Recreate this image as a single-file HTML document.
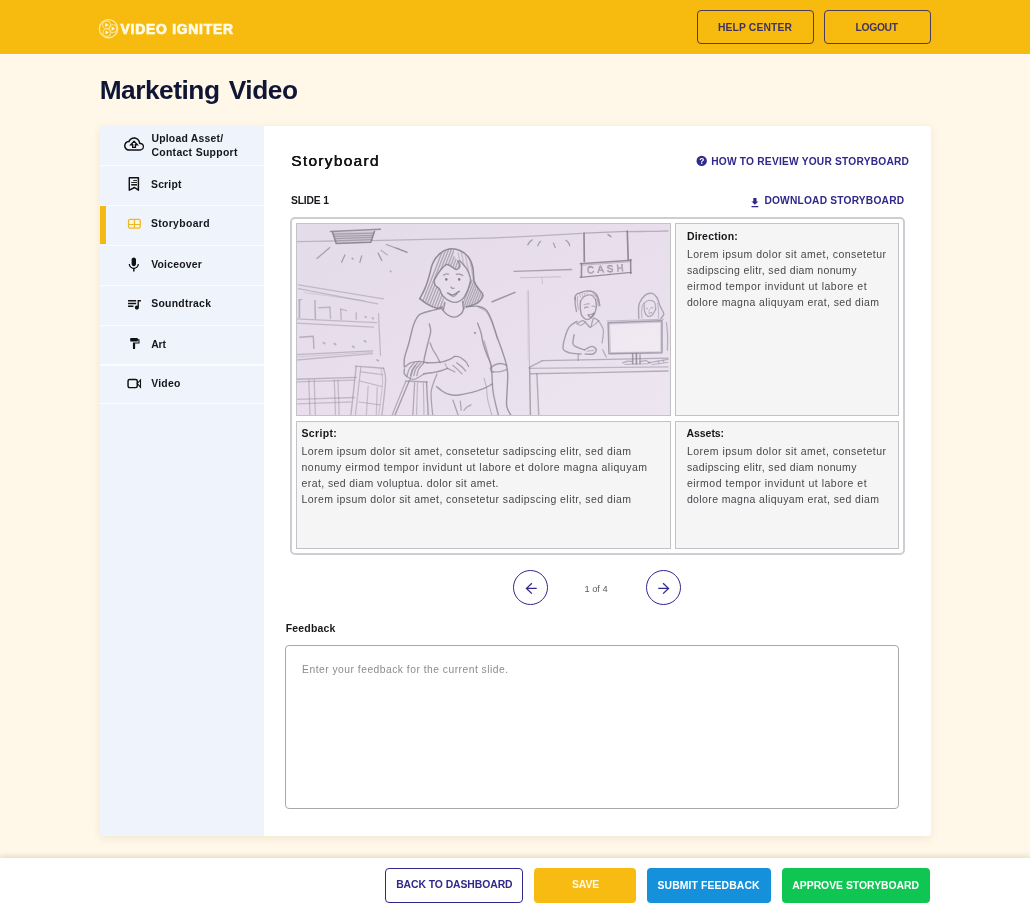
<!DOCTYPE html>
<html lang="en">
<head>
<meta charset="utf-8">
<title>Marketing Video - Storyboard</title>
<style>
*{box-sizing:border-box;margin:0;padding:0}
html,body{width:1030px;height:912px;overflow:hidden}
body{background:#fff7e8;font-family:"Liberation Sans",sans-serif;color:#17171b;position:relative}
.t{position:absolute;white-space:nowrap;font-family:"Liberation Sans",sans-serif}
#hdr{position:absolute;left:0;top:0;width:1030px;height:53.8px;background:#f7bb0f}
.hbtn{position:absolute;top:10px;height:34.2px;border:1.8px solid #4a3d55;border-radius:4px}
#card{position:absolute;left:100px;top:125.5px;width:830.5px;height:710px;background:#fff;border-radius:3px;box-shadow:0 2px 8px rgba(120,90,20,.10);overflow:hidden}
#side{position:absolute;left:0;top:0;width:164px;height:710px;background:#eff3fc}
.sep{position:absolute;left:0;width:164px;height:1.5px;background:#fafcff}
#act{position:absolute;left:0;top:80.5px;width:6px;height:38px;background:#f6b912}
#sb{position:absolute;left:290px;top:217px;width:615px;height:338px;border:2px solid #cecdd1;border-radius:5px;background:#fff}
.cell{position:absolute;border:1.5px solid #c3c2c7;background:#f5f5f6;overflow:hidden}
.circ{position:absolute;width:35px;height:35px;border:1.5px solid #2f2889;border-radius:50%}
#ta{position:absolute;left:285px;top:645px;width:614px;height:164px;border:1px solid #a9a9ad;border-radius:4px;background:#fff}
#foot{position:absolute;left:0;top:857.5px;width:1030px;height:55px;background:#fff;box-shadow:0 -2px 5px rgba(140,120,80,.22)}
.fb{position:absolute;top:10.5px;height:34.5px;border-radius:4px}
svg.ic{position:absolute;overflow:visible}
#txt{position:absolute;left:0;top:0;width:1030px;height:912px;will-change:transform}
svg{will-change:transform}
</style>
</head>
<body>
<div id="hdr"></div>
<div id="hdrline" style="position:absolute;left:0;top:53.8px;width:1030px;height:1.6px;background:#fffcf4"></div>
<div class="hbtn" style="left:697px;width:116.5px"></div>
<div class="hbtn" style="left:824px;width:107px"></div>
<div id="card">
  <div id="side">
    <div class="sep" style="top:39.0px"></div>
    <div class="sep" style="top:79.0px"></div>
    <div class="sep" style="top:119.0px"></div>
    <div class="sep" style="top:159.0px"></div>
    <div class="sep" style="top:199.0px"></div>
    <div class="sep" style="top:238.5px"></div>
    <div class="sep" style="top:277.0px"></div>
    <div id="act"></div>
  </div>
</div>
<div id="sb">
  <div class="cell" id="img" style="left:4px;top:4px;width:375px;height:193px;background:#e6e0ee"><svg style="position:absolute;left:-1.5px;top:-1.5px" width="375" height="193" viewBox="0 0 375 193">
<defs><filter id="pb" x="-5%" y="-5%" width="110%" height="110%"><feGaussianBlur stdDeviation=".42"/></filter>
<linearGradient id="pg" x1="0" y1="0" x2="1" y2="1"><stop offset="0" stop-color="#e4dce9"/><stop offset=".5" stop-color="#e8deec"/><stop offset="1" stop-color="#ebe4f0"/></linearGradient></defs>
<rect width="375" height="193" fill="url(#pg)"/>
<path d="M312.1 99.7 L366 97.8 L366 129.8 L313 130.7Z" fill="#fff" opacity=".28"/>
<path d="M36.5 9.1 L40.2 20.6 L74.8 19.2 L78.5 8.2Z" fill="#86818d" opacity=".22"/>
<path d="M242 151 L372 148.4 L372 193 L243.5 193Z" fill="#fff" opacity=".1"/>
<g filter="url(#pb)" fill="none" stroke="#86818d" stroke-linecap="round" stroke-linejoin="round">
<path d="M0.0 18.6 C6.0 18.5 29.3 18.1 36.0 18.0 C42.7 17.9 39.3 18.2 40.0 18.2" stroke-width="1.26" opacity="0.44"/>
<path d="M75.0 17.6 C82.5 17.4 101.2 17.0 120.0 16.6 C138.8 16.2 166.3 15.9 188.0 15.2 C209.7 14.5 233.7 13.2 250.0 12.4 C266.3 11.6 280.0 10.7 286.0 10.4" stroke-width="1.26" opacity="0.46"/>
<path d="M288.0 10.2 L331.3 8.4" stroke-width="1.26" opacity="0.54"/>
<path d="M332.0 8.6 C335.3 8.6 345.3 8.5 352.0 8.4 C358.7 8.3 368.7 8.1 372.0 8.0" stroke-width="1.26" opacity="0.49"/>
<path d="M34.5 8.4 L84.5 6.2" stroke-width="1.54" opacity="0.84"/>
<path d="M36.5 9.1 L40.2 20.6 L74.8 19.2 L78.5 8.2" stroke-width="1.54" opacity="0.89"/>
<path d="M37.2 11.2 L77.8 10.2" stroke-width="1.26" opacity="0.59"/>
<path d="M37.9 13.4 L77.2 12.3" stroke-width="1.26" opacity="0.59"/>
<path d="M38.6 15.6 L76.5 14.4" stroke-width="1.26" opacity="0.59"/>
<path d="M39.4 17.9 L75.7 16.7" stroke-width="1.26" opacity="0.59"/>
<path d="M21.0 35.6 L33.8 24.6" stroke-width="1.26" opacity="0.64"/>
<path d="M45.6 39.2 L48.9 31.9" stroke-width="1.26" opacity="0.69"/>
<path d="M63.9 39.4 L65.7 32.9" stroke-width="1.26" opacity="0.69"/>
<path d="M82.1 30.1 L85.8 37.4" stroke-width="1.26" opacity="0.69"/>
<path d="M85.0 27.2 L91.5 32.0" stroke-width="1.12" opacity="0.49"/>
<path d="M90.3 21.5 L111.0 29.2" stroke-width="1.26" opacity="0.64"/>
<path d="M56.2 35.4 L57.0 36.0" stroke-width="1.54" opacity="0.64"/>
<path d="M94.3 48.0 L95.0 48.6" stroke-width="1.54" opacity="0.54"/>
<path d="M100.0 24.8 L110.9 29.5" stroke-width="1.26" opacity="0.54"/>
<path d="M231.8 21.9 C232.1 21.4 232.8 19.9 233.6 19.0 C234.4 18.1 235.9 17.2 236.4 16.8" stroke-width="1.26" opacity="0.69"/>
<path d="M241.8 22.8 C242.0 22.4 242.5 20.9 243.0 20.2 C243.5 19.4 244.3 18.6 244.6 18.3" stroke-width="1.26" opacity="0.64"/>
<path d="M257.4 20.1 L259.2 24.6" stroke-width="1.26" opacity="0.64"/>
<path d="M270.1 17.3 C270.5 17.7 271.8 18.7 272.4 19.6 C273.0 20.5 273.6 22.3 273.8 22.8" stroke-width="1.26" opacity="0.69"/>
<path d="M288.0 10.0 L288.3 38.6" stroke-width="1.68" opacity="0.89"/>
<path d="M331.3 8.2 L332.2 36.8" stroke-width="1.68" opacity="0.89"/>
<path d="M312.0 11.6 L315.0 13.6" stroke-width="1.40" opacity="0.74"/>
<path d="M284.2 40.7 L335.2 37.2" stroke-width="1.40" opacity="0.84"/>
<path d="M285.6 40.5 L285.4 54.0" stroke-width="1.54" opacity="0.89"/>
<path d="M284.2 54.4 L335.2 49.4" stroke-width="1.40" opacity="0.84"/>
<path d="M334.6 36.6 L334.8 50.4" stroke-width="1.54" opacity="0.89"/>
<path d="M286.8 42.2 L333.5 38.8" stroke-width="0.98" opacity="0.44"/>
<path d="M218.1 48.4 L275.6 46.5" stroke-width="1.40" opacity="0.64"/>
<path d="M224.5 54.8 L264.7 53.8" stroke-width="1.12" opacity="0.34"/>
<path d="M246.0 55.0 L246.5 61.0" stroke-width="0.98" opacity="0.29"/>
<path d="M196.2 78.8 L219.0 69.4" stroke-width="1.54" opacity="0.79"/>
<path d="M232.2 67.5 C232.3 74.6 232.8 96.2 233.0 110.0 C233.2 123.8 233.3 136.2 233.6 150.0 C233.9 163.8 234.4 185.8 234.6 193.0" stroke-width="1.12" opacity="0.34"/>
<path d="M231.0 68.0 C231.1 73.3 231.4 88.7 231.6 100.0 C231.8 111.3 231.9 130.0 232.0 136.0" stroke-width="0.84" opacity="0.16"/>
<path d="M2.4 61.9 L87.4 75.9" stroke-width="1.26" opacity="0.40"/>
<path d="M2.4 65.7 L81.6 80.8" stroke-width="1.26" opacity="0.40"/>
<path d="M8.0 69.6 L68.0 77.6" stroke-width="0.98" opacity="0.22"/>
<path d="M3.4 76.9 L3.4 94.4" stroke-width="1.68" opacity="0.47"/>
<path d="M3.4 76.9 L6.0 76.5" stroke-width="1.26" opacity="0.40"/>
<path d="M18.9 77.4 L19.4 95.8" stroke-width="1.54" opacity="0.47"/>
<path d="M22.8 84.7 L33.5 84.2" stroke-width="1.40" opacity="0.44"/>
<path d="M34.0 84.2 L34.5 95.3" stroke-width="1.40" opacity="0.44"/>
<path d="M44.7 86.1 L45.1 96.3" stroke-width="1.40" opacity="0.44"/>
<path d="M44.7 86.1 L50.5 87.6" stroke-width="1.40" opacity="0.40"/>
<path d="M60.2 90.0 L60.2 96.3" stroke-width="1.40" opacity="0.44"/>
<path d="M69.0 93.6 L70.2 94.3" stroke-width="1.68" opacity="0.44"/>
<path d="M76.3 95.0 L77.4 95.7" stroke-width="1.68" opacity="0.44"/>
<path d="M0.0 95.8 L80.6 99.7" stroke-width="1.26" opacity="0.40"/>
<path d="M0.0 100.2 L77.7 104.1" stroke-width="1.26" opacity="0.40"/>
<path d="M82.5 90.5 C82.7 93.8 83.1 103.1 83.4 110.0 C83.7 116.9 84.3 128.3 84.5 132.0" stroke-width="1.26" opacity="0.40"/>
<path d="M3.7 114.3 L17.3 113.3 L17.9 125.2" stroke-width="1.40" opacity="0.51"/>
<path d="M27.4 119.7 L28.8 120.5" stroke-width="1.82" opacity="0.47"/>
<path d="M38.3 120.6 L39.7 121.4" stroke-width="1.82" opacity="0.47"/>
<path d="M56.6 123.4 L58.0 124.2" stroke-width="1.82" opacity="0.47"/>
<path d="M68.4 117.9 L69.8 118.7" stroke-width="1.82" opacity="0.47"/>
<path d="M81.0 137.0 L82.4 137.8" stroke-width="1.82" opacity="0.47"/>
<path d="M0.0 131.6 L76.7 127.9" stroke-width="1.26" opacity="0.44"/>
<path d="M0.0 137.0 L76.7 130.7" stroke-width="1.26" opacity="0.40"/>
<path d="M0.0 134.0 L76.0 129.4" stroke-width="0.98" opacity="0.26"/>
<path d="M0.0 156.2 L60.2 154.4" stroke-width="1.40" opacity="0.47"/>
<path d="M0.0 158.9 L58.4 157.1" stroke-width="1.26" opacity="0.40"/>
<path d="M12.8 157.0 L14.0 193.0" stroke-width="1.26" opacity="0.40"/>
<path d="M18.2 157.0 L19.4 193.0" stroke-width="1.26" opacity="0.40"/>
<path d="M38.3 157.0 L39.5 193.0" stroke-width="1.26" opacity="0.40"/>
<path d="M42.0 157.0 L43.2 193.0" stroke-width="1.26" opacity="0.40"/>
<path d="M0.0 176.3 L58.4 174.5" stroke-width="1.26" opacity="0.40"/>
<path d="M0.0 180.8 L54.8 179.0" stroke-width="1.26" opacity="0.36"/>
<path d="M60.2 143.5 L54.8 193.0" stroke-width="1.40" opacity="0.47"/>
<path d="M64.8 144.4 L59.3 193.0" stroke-width="1.26" opacity="0.40"/>
<path d="M59.3 143.1 L87.6 145.3" stroke-width="1.40" opacity="0.47"/>
<path d="M87.6 145.3 C87.9 147.4 89.9 150.1 89.6 158.0 C89.3 165.9 86.4 187.2 85.8 193.0" stroke-width="1.40" opacity="0.44"/>
<path d="M85.0 146.0 C85.3 148.3 87.0 152.2 86.6 160.0 C86.2 167.8 83.2 187.5 82.5 193.0" stroke-width="1.12" opacity="0.29"/>
<path d="M64.8 148.9 L86.7 151.7" stroke-width="1.26" opacity="0.40"/>
<path d="M63.9 158.0 L85.8 163.5" stroke-width="1.26" opacity="0.44"/>
<path d="M72.1 163.5 L70.3 193.0" stroke-width="1.26" opacity="0.36"/>
<path d="M81.2 164.4 L80.3 193.0" stroke-width="1.26" opacity="0.36"/>
<path d="M63.0 179.0 L84.0 181.8" stroke-width="1.26" opacity="0.40"/>
<path d="M123.8 75.7 C124.7 73.9 127.6 68.8 129.2 64.9 C130.8 61.1 132.1 56.7 133.3 52.6 C134.6 48.5 135.0 44.0 136.7 40.4 C138.4 36.8 140.8 33.3 143.5 30.9 C146.2 28.5 149.6 26.7 153.0 26.1 C156.4 25.5 160.7 26.2 163.9 27.5 C167.1 28.8 169.8 30.8 172.0 33.6 C174.2 36.4 175.8 40.4 176.8 44.5 C177.8 48.6 177.2 54.5 178.2 58.1 C179.2 61.7 181.4 63.8 182.9 66.2 C184.4 68.6 187.2 70.0 187.0 72.3 C186.8 74.6 184.3 77.9 181.6 79.8 C178.9 81.7 172.5 83.2 170.7 83.9" stroke-width="1.54" opacity="0.89"/>
<path d="M123.8 75.7 C125.0 76.6 128.5 79.6 131.3 81.2 C134.1 82.8 138.3 84.8 140.8 85.2 C143.3 85.7 145.3 84.1 146.2 83.9" stroke-width="1.54" opacity="0.89"/>
<path d="M139.2 55.6 C139.9 54.4 141.7 50.8 143.5 48.5 C145.3 46.2 148.3 42.5 150.3 41.7 C152.3 40.9 154.0 43.0 155.7 43.8 C157.4 44.6 159.1 46.6 160.5 46.5 C161.9 46.4 163.7 44.6 163.9 43.1 C164.1 41.6 162.2 38.6 161.9 37.7" stroke-width="1.40" opacity="0.84"/>
<path d="M163.9 37.7 C165.0 39.1 169.0 43.1 170.7 45.8 C172.4 48.5 173.5 51.7 174.1 54.0 C174.7 56.3 174.3 58.7 174.4 59.6" stroke-width="1.40" opacity="0.79"/>
<path d="M138.7 56.0 C138.6 56.6 138.0 58.3 138.2 59.4 C138.3 60.5 138.7 61.5 139.6 62.6 C140.5 63.7 142.3 64.5 143.5 66.2 C144.7 67.9 145.1 71.0 146.9 73.0 C148.7 75.0 152.0 77.4 154.4 78.4 C156.8 79.4 158.9 79.8 161.2 79.1 C163.5 78.4 166.2 76.6 168.0 74.4 C169.8 72.2 171.0 68.7 172.0 66.2 C173.0 63.7 173.8 60.5 174.1 59.4" stroke-width="1.40" opacity="0.84"/>
<path d="M150.3 56.4 m-1.2 0 a1.2 1.4 0 1 0 2.4 0 a1.2 1.4 0 1 0 -2.4 0Z" fill="#6d6874" stroke="none" opacity="0.85"/>
<path d="M163.2 56.4 m-1.2 0 a1.2 1.4 0 1 0 2.4 0 a1.2 1.4 0 1 0 -2.4 0Z" fill="#6d6874" stroke="none" opacity="0.85"/>
<path d="M147.4 52.2 C147.8 52.0 149.2 51.2 150.0 51.0 C150.8 50.8 152.1 51.2 152.5 51.2" stroke-width="1.26" opacity="0.74"/>
<path d="M160.3 51.3 C160.8 51.3 162.4 51.0 163.5 51.2 C164.6 51.4 166.2 52.3 166.8 52.5" stroke-width="1.26" opacity="0.74"/>
<path d="M155.0 63.8 C155.2 64.1 155.7 65.2 156.2 65.4 C156.7 65.6 157.7 65.2 158.0 65.2" stroke-width="1.26" opacity="0.74"/>
<path d="M151.7 70.0 C152.6 70.3 155.2 72.3 157.1 72.0 C159.0 71.7 162.2 68.9 163.2 68.3" stroke-width="1.54" opacity="0.89"/>
<path d="M153.6 71.4 C154.3 71.8 156.3 73.7 157.6 73.6 C158.9 73.5 160.6 71.1 161.2 70.6" stroke-width="1.12" opacity="0.64"/>
<path d="M148.9 79.8 C148.8 80.3 148.4 81.8 148.2 83.0 C147.9 84.2 147.5 86.2 147.4 86.8" stroke-width="1.40" opacity="0.79"/>
<path d="M166.6 78.4 C166.7 79.0 166.9 80.8 167.0 82.0 C167.1 83.2 167.3 84.8 167.4 85.4" stroke-width="1.40" opacity="0.79"/>
<path d="M146.2 86.6 C147.1 87.5 149.7 90.8 151.7 92.0 C153.7 93.2 156.2 94.3 158.4 94.1 C160.7 93.9 163.6 92.2 165.2 90.7 C166.8 89.2 167.5 86.1 168.0 85.2" stroke-width="1.40" opacity="0.84"/>
<path d="M146.2 85.2 C144.2 85.7 137.8 86.9 134.0 88.0 C130.2 89.1 125.8 89.7 123.1 92.0 C120.4 94.3 119.4 96.9 117.7 101.6 C116.0 106.3 114.4 114.4 112.9 120.0 C111.4 125.6 109.3 131.0 108.5 135.0 C107.7 139.0 108.3 142.5 108.3 144.0" stroke-width="1.40" opacity="0.79"/>
<path d="M168.0 83.9 C170.3 83.8 178.0 82.8 181.6 83.2 C185.2 83.7 187.4 84.4 189.7 86.6 C191.9 88.8 193.3 91.8 195.1 96.1 C196.9 100.4 198.9 107.4 200.6 112.4 C202.3 117.4 203.9 121.4 205.5 126.0 C207.1 130.6 208.9 135.7 209.9 139.8 C210.9 143.9 211.5 145.8 211.7 150.8 C211.9 155.8 211.2 164.5 211.0 170.0 C210.8 175.5 210.1 179.8 210.8 183.6 C211.5 187.4 214.6 191.4 215.4 193.0" stroke-width="1.40" opacity="0.79"/>
<path d="M183.0 84.6 C184.2 85.3 188.2 86.3 190.5 89.0 C192.8 91.7 194.7 96.5 196.5 101.0 C198.3 105.5 200.7 113.5 201.5 116.0" stroke-width="1.12" opacity="0.44"/>
<path d="M133.3 100.9 C133.5 102.2 134.9 105.2 134.7 108.4 C134.5 111.6 132.9 115.7 131.9 120.0 C130.9 124.3 129.3 130.7 128.6 134.0 C127.9 137.3 127.8 139.0 127.6 140.0" stroke-width="1.40" opacity="0.74"/>
<path d="M181.6 100.2 C182.2 101.8 184.1 106.4 185.0 109.7 C185.9 113.0 186.0 116.3 187.0 120.0 C188.0 123.7 189.6 128.1 191.0 132.0 C192.4 135.9 194.3 137.3 195.3 143.5 C196.3 149.7 195.9 160.8 197.1 169.0 C198.3 177.2 201.7 189.0 202.6 193.0" stroke-width="1.40" opacity="0.74"/>
<path d="M178.7 109.6 L179.3 110.2" stroke-width="1.82" opacity="0.74"/>
<path d="M134.1 119.7 C134.6 120.9 135.9 124.9 137.0 127.0 C138.1 129.1 139.3 130.4 140.5 132.5 C141.7 134.6 143.6 138.6 144.2 139.8" stroke-width="1.26" opacity="0.69"/>
<path d="M141.0 151.0 C140.4 152.5 138.5 157.0 137.5 160.0 C136.5 163.0 135.4 165.5 135.1 169.0 C134.8 172.5 135.3 177.0 135.6 181.0 C135.9 185.0 136.7 191.0 136.9 193.0" stroke-width="1.26" opacity="0.64"/>
<path d="M109.5 143.5 C110.2 143.0 112.0 141.2 113.5 140.4 C115.0 139.6 116.7 139.2 118.6 138.9 C120.5 138.6 122.9 138.4 125.0 138.6 C127.1 138.8 130.3 139.6 131.4 139.8" stroke-width="1.40" opacity="0.74"/>
<path d="M108.4 146.0 C108.4 146.8 107.8 149.3 108.2 150.5 C108.6 151.7 110.2 152.9 110.6 153.4" stroke-width="1.40" opacity="0.74"/>
<path d="M111.2 152.6 C111.5 151.5 112.0 148.1 113.2 146.0 C114.4 143.9 117.4 140.8 118.2 139.8" stroke-width="1.26" opacity="0.64"/>
<path d="M114.6 152.6 C114.9 151.5 115.4 148.1 116.6 146.0 C117.8 143.9 120.8 140.8 121.6 139.8" stroke-width="1.26" opacity="0.64"/>
<path d="M117.8 152.6 C118.1 151.5 118.6 148.1 119.8 146.0 C121.0 143.9 124.0 140.8 124.8 139.8" stroke-width="1.26" opacity="0.64"/>
<path d="M120.8 152.6 C121.1 151.5 121.6 148.1 122.8 146.0 C124.0 143.9 127.0 140.8 127.8 139.8" stroke-width="1.26" opacity="0.64"/>
<path d="M110.6 153.4 C111.8 153.9 115.1 156.8 118.0 156.4 C120.9 156.0 126.3 151.9 128.0 151.0" stroke-width="1.26" opacity="0.64"/>
<path d="M131.4 139.8 C132.7 139.8 136.6 139.8 139.0 139.6 C141.4 139.4 143.7 139.4 146.0 138.9 C148.3 138.4 150.9 137.5 153.0 136.6 C155.1 135.7 157.8 133.9 158.8 133.4" stroke-width="1.40" opacity="0.74"/>
<path d="M127.8 150.8 C129.2 150.6 133.3 150.3 136.0 149.8 C138.7 149.3 141.6 148.8 144.2 148.0 C146.8 147.2 150.3 145.8 151.5 145.3" stroke-width="1.40" opacity="0.74"/>
<path d="M158.8 133.4 C159.6 133.5 162.0 133.4 163.5 134.0 C165.0 134.6 166.7 136.1 167.9 137.1 C169.1 138.1 170.0 138.9 170.8 140.0 C171.6 141.1 172.2 142.9 172.5 143.5" stroke-width="1.26" opacity="0.74"/>
<path d="M160.6 139.8 C161.4 140.4 164.0 142.1 165.5 143.5 C167.0 144.9 169.0 147.2 169.7 148.0" stroke-width="1.26" opacity="0.69"/>
<path d="M157.0 142.5 C157.8 143.2 160.0 145.0 161.5 146.4 C163.0 147.8 165.2 150.1 166.0 150.8" stroke-width="1.26" opacity="0.64"/>
<path d="M151.5 145.3 C152.1 145.6 153.8 146.4 155.0 147.0 C156.2 147.6 158.2 148.6 158.8 148.9" stroke-width="1.26" opacity="0.64"/>
<path d="M149.0 140.6 C149.3 141.2 150.2 143.2 150.6 144.0 C151.0 144.8 151.3 145.1 151.5 145.3" stroke-width="1.12" opacity="0.54"/>
<path d="M113.2 158.0 L98.6 193.0" stroke-width="1.40" opacity="0.69"/>
<path d="M109.5 159.0 L95.8 193.0" stroke-width="1.26" opacity="0.54"/>
<path d="M118.6 159.9 L116.8 193.0" stroke-width="1.26" opacity="0.59"/>
<path d="M121.5 160.0 L120.5 193.0" stroke-width="1.12" opacity="0.44"/>
<path d="M130.5 159.0 L132.3 193.0" stroke-width="1.40" opacity="0.69"/>
<path d="M109.5 158.0 L131.4 159.0" stroke-width="1.26" opacity="0.59"/>
<path d="M127.4 160.0 L128.0 193.0" stroke-width="1.12" opacity="0.44"/>
<path d="M114.0 157.0 C114.4 155.5 115.6 150.3 116.5 148.0 C117.4 145.7 119.0 143.8 119.5 143.0" stroke-width="1.26" opacity="0.59"/>
<path d="M140.5 163.5 C141.4 164.2 144.2 166.8 146.0 168.0 C147.8 169.2 149.5 170.1 151.5 170.8 C153.5 171.5 155.9 172.0 158.0 172.2 C160.1 172.3 161.3 172.2 164.3 171.7 C167.3 171.2 172.1 170.4 176.0 169.4 C179.9 168.4 184.6 166.8 188.0 165.4 C191.4 164.0 195.0 161.7 196.4 161.0" stroke-width="1.40" opacity="0.74"/>
<path d="M157.0 177.2 L162.4 193.0" stroke-width="1.26" opacity="0.64"/>
<path d="M164.3 178.1 L165.2 187.3" stroke-width="1.26" opacity="0.59"/>
<path d="M167.9 187.3 C168.4 186.8 169.8 184.9 171.0 184.0 C172.2 183.1 174.5 182.2 175.2 181.8" stroke-width="1.26" opacity="0.59"/>
<path d="M194.4 145.3 C195.0 144.8 196.6 143.2 198.0 142.4 C199.4 141.6 201.1 140.9 202.6 140.7 C204.1 140.4 205.6 140.6 207.0 140.9 C208.4 141.2 210.2 142.2 210.8 142.5" stroke-width="1.40" opacity="0.74"/>
<path d="M194.6 146.0 C194.7 146.4 194.8 148.1 195.2 148.6 C195.6 149.1 196.8 148.9 197.1 149.0" stroke-width="1.26" opacity="0.64"/>
<path d="M197.1 149.0 C198.2 148.9 201.7 149.0 204.0 148.6 C206.3 148.2 209.8 146.8 211.0 146.4" stroke-width="1.26" opacity="0.64"/>
<path d="M188.0 117.9 C188.6 119.9 190.3 125.7 191.5 130.0 C192.7 134.3 194.7 141.2 195.3 143.5" stroke-width="1.26" opacity="0.59"/>
<path d="M188.0 155.0 C188.4 156.7 189.9 161.5 190.5 165.0 C191.1 168.5 190.7 171.3 191.6 176.0 C192.5 180.7 195.3 190.2 196.0 193.0" stroke-width="1.12" opacity="0.44"/>
<path d="M246.4 137.6 L300.0 136.6 L372.0 135.2" stroke-width="1.26" opacity="0.55"/>
<path d="M246.4 137.6 L233.3 144.4" stroke-width="1.26" opacity="0.55"/>
<path d="M233.3 145.3 L300.0 144.6 L372.0 143.8" stroke-width="1.26" opacity="0.46"/>
<path d="M234.5 150.8 L300.0 149.6 L372.0 148.0" stroke-width="1.40" opacity="0.55"/>
<path d="M233.6 144.6 L234.4 193.0" stroke-width="1.40" opacity="0.51"/>
<path d="M240.9 150.8 L242.8 193.0" stroke-width="1.40" opacity="0.55"/>
<path d="M278.7 76.2 C278.9 75.6 279.0 73.6 279.6 72.6 C280.2 71.6 280.5 71.2 282.2 70.4 C283.9 69.7 287.2 68.3 289.8 68.1 C292.4 67.9 295.9 68.1 297.9 69.2 C299.9 70.3 301.0 72.3 302.0 74.5 C303.0 76.7 303.5 81.2 303.8 82.6" stroke-width="1.40" opacity="0.75"/>
<path d="M279.4 75.0 C279.4 76.0 279.0 78.8 279.2 81.0 C279.4 83.2 280.3 87.2 280.5 88.5" stroke-width="1.40" opacity="0.66"/>
<path d="M281.6 73.6 C281.6 74.5 281.3 76.9 281.4 79.0 C281.5 81.1 282.2 85.2 282.4 86.4" stroke-width="1.12" opacity="0.47"/>
<path d="M284.5 78.0 C285.2 77.2 286.8 74.3 288.6 73.3 C290.5 72.3 293.8 71.5 295.6 72.1 C297.5 72.7 299.0 76.0 299.7 76.8" stroke-width="1.26" opacity="0.66"/>
<path d="M284.5 78.0 C284.5 79.0 284.2 81.9 284.3 84.0 C284.4 86.1 284.6 89.1 285.1 90.8 C285.6 92.5 286.4 93.4 287.4 94.4 C288.4 95.4 289.7 96.6 291.0 96.6 C292.3 96.6 294.1 95.6 295.4 94.6 C296.6 93.6 297.7 92.6 298.5 90.8 C299.3 89.0 300.1 86.1 300.3 83.8 C300.5 81.5 299.8 78.0 299.7 76.8" stroke-width="1.40" opacity="0.72"/>
<path d="M299.9 72.6 C300.2 73.3 301.2 75.3 301.6 77.0 C302.0 78.7 302.1 82.0 302.2 83.0" stroke-width="1.12" opacity="0.52"/>
<path d="M297.0 70.4 L299.4 73.2" stroke-width="1.12" opacity="0.47"/>
<path d="M288.6 85.0 C288.9 84.8 289.6 84.2 290.2 84.1 C290.8 84.0 291.8 84.2 292.1 84.2" stroke-width="1.26" opacity="0.70"/>
<path d="M288.0 82.0 C288.4 81.8 289.7 81.2 290.6 81.0 C291.5 80.8 292.9 80.9 293.3 80.9" stroke-width="1.12" opacity="0.56"/>
<path d="M296.0 83.4 C296.3 83.3 297.1 83.0 297.6 83.0 C298.1 83.0 298.8 83.5 299.0 83.6" stroke-width="1.12" opacity="0.56"/>
<path d="M292.1 92.0 C292.6 92.4 294.0 94.6 295.0 94.3 C296.0 94.0 297.4 90.9 297.9 90.2" stroke-width="1.40" opacity="0.75"/>
<path d="M292.1 92.0 C292.6 91.9 294.0 91.7 295.0 91.4 C296.0 91.1 297.4 90.4 297.9 90.2" stroke-width="1.12" opacity="0.61"/>
<path d="M284.8 74.6 L283.6 71.2" stroke-width="0.98" opacity="0.42"/>
<path d="M287.0 73.7 L286.0 70.8" stroke-width="0.98" opacity="0.42"/>
<path d="M289.2 72.8 L288.4 70.4" stroke-width="0.98" opacity="0.42"/>
<path d="M291.4 71.9 L290.8 70.0" stroke-width="0.98" opacity="0.42"/>
<path d="M281.0 100.7 C282.1 100.2 285.3 97.2 287.5 97.8 C289.7 98.4 292.8 104.6 294.4 104.2 C296.0 103.8 296.0 96.5 297.4 95.4 C298.8 94.3 301.7 97.4 302.6 97.8" stroke-width="1.26" opacity="0.66"/>
<path d="M281.0 100.7 C281.6 101.0 283.1 102.7 284.6 102.4 C286.1 102.1 288.9 99.6 289.8 99.0" stroke-width="1.12" opacity="0.52"/>
<path d="M294.4 104.2 C295.1 103.8 297.2 102.7 298.6 101.6 C300.0 100.5 301.9 98.4 302.6 97.8" stroke-width="1.12" opacity="0.52"/>
<path d="M281.0 98.4 C279.8 99.3 275.4 101.2 273.5 103.6 C271.6 106.0 270.5 109.2 269.4 112.9 C268.3 116.6 266.4 122.9 267.1 125.7 C267.8 128.5 270.5 128.9 273.5 129.8 C276.5 130.7 283.2 130.8 285.1 131.0" stroke-width="1.40" opacity="0.70"/>
<path d="M278.1 111.8 C277.9 113.3 276.4 119.0 277.0 121.1 C277.6 123.2 279.7 123.4 281.6 124.4 C283.5 125.4 287.4 126.5 288.6 126.9" stroke-width="1.40" opacity="0.70"/>
<path d="M288.6 126.9 C289.8 126.3 293.7 123.4 295.6 123.4 C297.6 123.4 300.1 125.6 300.3 126.9 C300.5 128.2 298.7 130.3 296.8 131.0 C294.9 131.7 290.5 131.0 289.2 131.0" stroke-width="1.40" opacity="0.70"/>
<path d="M291.0 128.2 L297.6 127.4" stroke-width="1.12" opacity="0.47"/>
<path d="M282.2 131.6 L282.2 137.4" stroke-width="1.26" opacity="0.56"/>
<path d="M302.6 97.8 C303.4 99.3 306.7 103.4 307.3 107.1 C307.9 110.8 306.3 117.8 306.1 119.9" stroke-width="1.26" opacity="0.56"/>
<path d="M306.7 126.9 L310.2 133.9" stroke-width="1.26" opacity="0.52"/>
<path d="M342.8 95.4 C342.8 94.2 342.5 90.5 342.6 88.0 C342.7 85.5 342.3 83.0 343.4 80.3 C344.5 77.6 347.1 73.8 349.2 72.1 C351.3 70.4 354.2 70.0 356.2 70.4 C358.1 70.8 359.5 72.3 360.9 74.5 C362.3 76.7 363.2 81.1 364.4 83.8 C365.5 86.5 367.7 88.9 367.8 90.8 C367.9 92.7 365.4 94.6 364.9 95.4" stroke-width="1.40" opacity="0.63"/>
<path d="M348.0 80.3 C348.8 79.8 350.9 77.6 352.7 77.4 C354.4 77.2 357.3 77.6 358.5 79.1 C359.7 80.5 359.5 84.9 359.7 86.1" stroke-width="1.26" opacity="0.52"/>
<path d="M348.0 80.3 C348.1 81.7 348.0 86.4 348.6 88.5 C349.2 90.6 350.2 92.5 351.5 93.1 C352.8 93.7 354.8 93.2 356.2 92.0 C357.6 90.8 359.1 87.1 359.7 86.1" stroke-width="1.26" opacity="0.61"/>
<path d="M346.0 95.0 C345.9 93.8 345.5 90.2 345.6 88.0 C345.7 85.8 346.3 82.7 346.4 81.6" stroke-width="1.12" opacity="0.42"/>
<path d="M361.6 80.0 C361.8 81.3 362.5 85.5 362.6 88.0 C362.7 90.5 362.4 93.8 362.4 95.0" stroke-width="1.12" opacity="0.42"/>
<path d="M351 85.5 m-.7 0 a.7 .8 0 1 0 1.4 0 a.7 .8 0 1 0 -1.4 0Z" fill="#6d6874" stroke="none" opacity="0.6"/>
<path d="M354.6 85.0 L356.8 84.6" stroke-width="1.12" opacity="0.52"/>
<path d="M352.6 90.2 L355.6 89.6" stroke-width="1.12" opacity="0.56"/>
<path d="M353.4 86.5 L353.0 88.4" stroke-width="0.98" opacity="0.42"/>
<path d="M312.1 99.7 L366.0 97.8 L366.0 129.8 L313.0 130.7 L312.1 99.7" stroke-width="1.47" opacity="0.72"/>
<path d="M313.6 101.0 L364.8 99.2 L364.8 128.8 L314.4 129.6 L313.6 101.0" stroke-width="0.98" opacity="0.32"/>
<path d="M370.4 99.6 C370.6 101.7 371.4 107.4 371.6 112.0 C371.8 116.6 371.4 124.5 371.4 127.0" stroke-width="1.26" opacity="0.52"/>
<path d="M311.0 98.0 L367.5 96.2" stroke-width="1.12" opacity="0.42"/>
<path d="M336.7 130.7 L336.7 140.7" stroke-width="1.54" opacity="0.75"/>
<path d="M340.4 130.7 L340.4 140.7" stroke-width="1.68" opacity="0.80"/>
<path d="M344.0 131.6 L344.0 140.7" stroke-width="1.40" opacity="0.66"/>
<path d="M326.7 139.8 C327.6 139.5 330.4 138.4 332.0 138.2 C333.6 138.0 335.3 138.5 336.0 138.6" stroke-width="1.26" opacity="0.56"/>
<path d="M344.0 138.6 C345.0 138.4 348.3 137.3 350.0 137.6 C351.7 137.9 353.4 139.8 354.1 140.2" stroke-width="1.26" opacity="0.56"/>
<path d="M329.0 141.4 L352.0 140.8" stroke-width="1.12" opacity="0.47"/>
<path d="M352.2 139.8 L372.0 136.4" stroke-width="1.26" opacity="0.52"/>
<path d="M356.0 141.6 L372.0 139.4" stroke-width="1.12" opacity="0.42"/>
<path d="M362.0 137.8 L363.0 140.4" stroke-width="1.12" opacity="0.42"/>
<path d="M367.0 137.0 L368.0 139.6" stroke-width="1.12" opacity="0.42"/>
</g>
<clipPath id="cpHL"><path d="M153 26.1 L143.5 30.9 L136.7 40.4 L133.3 52.6 L129.2 64.9 L123.8 75.7 L131.3 81.2 L140.8 85.2 L146.2 83.9 L148.9 79.8 L146.9 73 L143.5 66.2 L139.6 62.6 L138.7 56 L143.5 48.5 L150.3 41.7 L155.7 43.8 L160.5 46.5 L163.9 43.1 L161.9 37.7 L158 33 L158 26.5Z"/></clipPath>
<clipPath id="cpHR"><path d="M174.4 55 L178.2 58.1 L182.9 66.2 L187 72.3 L181.6 79.8 L170.7 83.9 L167 82 L166.6 78.4 L168 74.4 L172 66.2 L174.1 59.4Z"/></clipPath>
<clipPath id="cpHT"><path d="M161.9 37.7 L160 31 L163.9 27.5 L172 33.6 L176.8 44.5 L178.2 58.1 L174.1 54 L170.7 45.8Z"/></clipPath>
<path clip-path="url(#cpHL)" filter="url(#pb)" d="M148.0 24.0 L123.0 88.0" fill="none" stroke="#86818d" stroke-width="1.47" opacity="0.56"/>
<path clip-path="url(#cpHL)" filter="url(#pb)" d="M150.8 24.0 L125.8 88.0" fill="none" stroke="#86818d" stroke-width="1.47" opacity="0.56"/>
<path clip-path="url(#cpHL)" filter="url(#pb)" d="M153.6 24.0 L128.6 88.0" fill="none" stroke="#86818d" stroke-width="1.47" opacity="0.56"/>
<path clip-path="url(#cpHL)" filter="url(#pb)" d="M156.4 24.0 L131.4 88.0" fill="none" stroke="#86818d" stroke-width="1.47" opacity="0.56"/>
<path clip-path="url(#cpHL)" filter="url(#pb)" d="M159.2 24.0 L134.2 88.0" fill="none" stroke="#86818d" stroke-width="1.47" opacity="0.56"/>
<path clip-path="url(#cpHL)" filter="url(#pb)" d="M162.0 24.0 L137.0 88.0" fill="none" stroke="#86818d" stroke-width="1.47" opacity="0.56"/>
<path clip-path="url(#cpHL)" filter="url(#pb)" d="M164.8 24.0 L139.8 88.0" fill="none" stroke="#86818d" stroke-width="1.47" opacity="0.56"/>
<path clip-path="url(#cpHL)" filter="url(#pb)" d="M167.6 24.0 L142.6 88.0" fill="none" stroke="#86818d" stroke-width="1.47" opacity="0.56"/>
<path clip-path="url(#cpHL)" filter="url(#pb)" d="M170.4 24.0 L145.4 88.0" fill="none" stroke="#86818d" stroke-width="1.47" opacity="0.56"/>
<path clip-path="url(#cpHL)" filter="url(#pb)" d="M173.2 24.0 L148.2 88.0" fill="none" stroke="#86818d" stroke-width="1.47" opacity="0.56"/>
<path clip-path="url(#cpHL)" filter="url(#pb)" d="M176.0 24.0 L151.0 88.0" fill="none" stroke="#86818d" stroke-width="1.47" opacity="0.56"/>
<path clip-path="url(#cpHL)" filter="url(#pb)" d="M178.8 24.0 L153.8 88.0" fill="none" stroke="#86818d" stroke-width="1.47" opacity="0.56"/>
<path clip-path="url(#cpHL)" filter="url(#pb)" d="M181.6 24.0 L156.6 88.0" fill="none" stroke="#86818d" stroke-width="1.47" opacity="0.56"/>
<path clip-path="url(#cpHL)" filter="url(#pb)" d="M184.4 24.0 L159.4 88.0" fill="none" stroke="#86818d" stroke-width="1.47" opacity="0.56"/>
<path clip-path="url(#cpHL)" filter="url(#pb)" d="M187.2 24.0 L162.2 88.0" fill="none" stroke="#86818d" stroke-width="1.47" opacity="0.56"/>
<path clip-path="url(#cpHR)" filter="url(#pb)" d="M178.0 52.0 L164.0 88.0" fill="none" stroke="#86818d" stroke-width="1.47" opacity="0.56"/>
<path clip-path="url(#cpHR)" filter="url(#pb)" d="M180.3 52.0 L166.3 88.0" fill="none" stroke="#86818d" stroke-width="1.47" opacity="0.56"/>
<path clip-path="url(#cpHR)" filter="url(#pb)" d="M182.6 52.0 L168.6 88.0" fill="none" stroke="#86818d" stroke-width="1.47" opacity="0.56"/>
<path clip-path="url(#cpHR)" filter="url(#pb)" d="M184.9 52.0 L170.9 88.0" fill="none" stroke="#86818d" stroke-width="1.47" opacity="0.56"/>
<path clip-path="url(#cpHR)" filter="url(#pb)" d="M187.2 52.0 L173.2 88.0" fill="none" stroke="#86818d" stroke-width="1.47" opacity="0.56"/>
<path clip-path="url(#cpHR)" filter="url(#pb)" d="M189.5 52.0 L175.5 88.0" fill="none" stroke="#86818d" stroke-width="1.47" opacity="0.56"/>
<path clip-path="url(#cpHR)" filter="url(#pb)" d="M191.8 52.0 L177.8 88.0" fill="none" stroke="#86818d" stroke-width="1.47" opacity="0.56"/>
<path clip-path="url(#cpHR)" filter="url(#pb)" d="M194.1 52.0 L180.1 88.0" fill="none" stroke="#86818d" stroke-width="1.47" opacity="0.56"/>
<path clip-path="url(#cpHR)" filter="url(#pb)" d="M196.4 52.0 L182.4 88.0" fill="none" stroke="#86818d" stroke-width="1.47" opacity="0.56"/>
<path clip-path="url(#cpHT)" filter="url(#pb)" d="M161.0 24.0 L168.0 60.0" fill="none" stroke="#86818d" stroke-width="1.47" opacity="0.32"/>
<path clip-path="url(#cpHT)" filter="url(#pb)" d="M164.4 24.0 L171.4 60.0" fill="none" stroke="#86818d" stroke-width="1.47" opacity="0.32"/>
<path clip-path="url(#cpHT)" filter="url(#pb)" d="M167.8 24.0 L174.8 60.0" fill="none" stroke="#86818d" stroke-width="1.47" opacity="0.32"/>
<path clip-path="url(#cpHT)" filter="url(#pb)" d="M171.2 24.0 L178.2 60.0" fill="none" stroke="#86818d" stroke-width="1.47" opacity="0.32"/>
<path clip-path="url(#cpHT)" filter="url(#pb)" d="M174.6 24.0 L181.6 60.0" fill="none" stroke="#86818d" stroke-width="1.47" opacity="0.32"/>
<g filter="url(#pb)" fill="none" stroke="#86818d" stroke-linecap="round" stroke-linejoin="round">
<text x="291.3" y="50.6" transform="rotate(-4.2 291.3 50.6)" font-family="Liberation Sans, sans-serif" font-size="9.8" letter-spacing="3.1" fill="none" stroke="#86818d" stroke-width=".55" opacity=".85">CASH</text>
</g></svg></div>
  <div class="cell" style="left:383px;top:4px;width:224px;height:193px"></div>
  <div class="cell" style="left:4px;top:202px;width:375px;height:128px"></div>
  <div class="cell" style="left:383px;top:202px;width:224px;height:128px"></div>
</div>
<div class="circ" style="left:513.2px;top:570.2px"></div>
<div class="circ" style="left:646.2px;top:570.2px"></div>
<div id="ta"></div>
<div id="foot">
  <div class="fb" style="left:385px;width:138px;border:1.5px solid #2f2889;background:#fff"></div>
  <div class="fb" style="left:534px;width:102px;background:#f7bb12"></div>
  <div class="fb" style="left:647px;width:123.5px;background:#1591dc"></div>
  <div class="fb" style="left:782px;width:148px;background:#10c653"></div>
</div>
<!-- logo mark -->
<svg class="ic" style="left:98px;top:18px" width="22" height="22" viewBox="0 0 22 22">
  <circle cx="10.5" cy="10.7" r="9.1" fill="none" stroke="#fdeaa0" stroke-width="1.35"/>
  <circle cx="8.6" cy="6.9" r="3.9" fill="none" stroke="#fce59a" stroke-width="1.05"/>
  <circle cx="14.9" cy="10.6" r="3.9" fill="none" stroke="#fce59a" stroke-width="1.05"/>
  <circle cx="8.8" cy="14.6" r="3.9" fill="none" stroke="#fce59a" stroke-width="1.05"/>
  <path d="M7.3 4.9 L10.7 6.9 L7.3 8.9Z M13.6 8.5 L17.2 10.6 L13.6 12.7Z M7.5 12.6 L10.9 14.6 L7.5 16.6Z" fill="#fffbe6"/>
</svg>
<!-- cloud upload -->
<svg class="ic" style="left:123.95px;top:134.05px" width="20.1" height="20.1" viewBox="0 0 24 24">
  <path fill="#111" d="M19.35 10.04C18.67 6.59 15.64 4 12 4 9.11 4 6.6 5.64 5.35 8.04 2.34 8.36 0 10.91 0 14c0 3.31 2.69 6 6 6h13c2.76 0 5-2.24 5-5 0-2.64-2.05-4.78-4.65-4.96zM19 18.2H6c-2.32 0-4.2-1.88-4.2-4.2 0-2.15 1.6-3.95 3.74-4.17l1.12-.11.52-1C8.04 7.1 9.92 5.8 12 5.8c2.75 0 5.12 1.95 5.65 4.65l.32 1.57 1.6.12c1.64.1 2.92 1.48 2.92 3.1 0 1.73-1.42 2.96-3.15 2.96z"/>
  <path fill="#fff" stroke="#111" stroke-width="1.7" stroke-linejoin="miter" d="M8.1 12.9 L12 8.8 L15.9 12.9 H13.6 V16 H10.4 V12.9Z"/>
</svg>
<!-- script -->
<svg class="ic" style="left:127px;top:176px" width="14" height="16" viewBox="0 0 14 16">
  <path d="M2.3 1.8 H11.4 V14.2 L7.6 11.5 L2.3 14.2Z" fill="none" stroke="#111" stroke-width="1.45" stroke-linejoin="round"/>
  <path d="M6.2 4.55 H10 M4.2 6.5 H10" stroke="#111" stroke-width=".9"/>
  <path d="M4.2 8.8 H10" stroke="#111" stroke-width="1.5"/>
</svg>
<!-- storyboard (active) -->
<svg class="ic" style="left:127px;top:218px" width="15" height="12" viewBox="0 0 15 12">
  <rect x="1.55" y="1.35" width="11.7" height="8.8" rx="1.6" fill="#fdf6d8" stroke="#edb92c" stroke-width="1.3"/>
  <path d="M7.5 1.4 V10.1 M1.6 6.5 H13.2" stroke="#edb92c" stroke-width="1.2"/>
</svg>
<!-- mic -->
<svg class="ic" style="left:125.4px;top:256.4px" width="17.64" height="17.64" viewBox="0 0 24 24">
  <path fill="#111" d="M12 14c1.66 0 2.99-1.34 2.99-3L15 5c0-1.66-1.34-3-3-3S9 3.34 9 5v6c0 1.66 1.34 3 3 3zm5.3-3c0 3-2.54 5.1-5.3 5.1S6.7 14 6.7 11H5c0 3.41 2.72 6.23 6 6.72V21h2v-3.28c3.28-.48 6-3.3 6-6.72h-1.7z"/>
</svg>
<!-- soundtrack -->
<svg class="ic" style="left:125.66px;top:296.4px" width="16.32" height="16.32" viewBox="0 0 24 24">
  <path fill="#111" d="M15 6H3v2h12V6zm0 4H3v2h12v-2zM3 16h8v-2H3v2zM17 6v8.18c-.31-.11-.65-.18-1-.18-1.66 0-3 1.34-3 3s1.34 3 3 3 3-1.34 3-3V8h3V6h-5z"/>
</svg>
<!-- art -->
<svg class="ic" style="left:127.7px;top:336.6px" width="13.13" height="13.13" viewBox="0 0 24 24">
  <path fill="#111" d="M18 4V3c0-.55-.45-1-1-1H5c-.55 0-1 .45-1 1v4c0 .55.45 1 1 1h12c.55 0 1-.45 1-1V6h1v4H9v11c0 .55.45 1 1 1h2c.55 0 1-.45 1-1v-9h8V4h-3z"/>
</svg>
<!-- video -->
<svg class="ic" style="left:126px;top:377px" width="17" height="13" viewBox="0 0 17 13">
  <rect x="2.05" y="2.5" width="9.2" height="8.1" rx="1.5" fill="none" stroke="#111" stroke-width="1.45"/>
  <path d="M11.3 6.5 L14.5 2.9 V10.2 Z" fill="none" stroke="#111" stroke-width="1.1" stroke-linejoin="miter"/>
</svg>
<!-- help -->
<svg class="ic" style="left:696px;top:155px" width="12" height="12" viewBox="0 0 12 12">
  <circle cx="5.7" cy="5.9" r="5.2" fill="#332a8e"/>
  <text x="5.7" y="8.9" text-anchor="middle" font-family="Liberation Sans, sans-serif" font-weight="bold" font-size="8.4" fill="#fff">?</text>
</svg>
<!-- download -->
<svg class="ic" style="left:750px;top:197px" width="10" height="11" viewBox="0 0 10 11">
  <path d="M3.3 .9 H6.5 V4.4 H8.3 L4.9 7.8 L1.5 4.4 H3.3Z M1.5 8.9 H8.3 V10.3 H1.5Z" fill="#2f2889"/>
</svg>
<!-- pagination arrows -->
<svg class="ic" style="left:520px;top:578px" width="22" height="20" viewBox="0 0 22 20">
  <path d="M16.7 10.4 H6.6 M11.9 5.3 L6.5 10.4 L11.9 15.6" fill="none" stroke="#2f2889" stroke-width="1.3"/>
</svg>
<svg class="ic" style="left:653px;top:578px" width="22" height="20" viewBox="0 0 22 20">
  <path d="M5.3 10.4 H15.4 M10.1 5.3 L15.5 10.4 L10.1 15.6" fill="none" stroke="#2f2889" stroke-width="1.3"/>
</svg>


<div id="txt">
<div class="t" style="left:120.60px;top:20.08px;font-size:13.9px;line-height:18px;font-weight:bold;color:#fffbea;letter-spacing:0.743px;-webkit-text-stroke:.7px #fffbea;">VIDEO IGNITER</div>
<div class="t" style="left:717.90px;top:21.13px;font-size:10.3px;line-height:13px;font-weight:bold;color:#3d3263;letter-spacing:0.158px;">HELP CENTER</div>
<div class="t" style="left:855.50px;top:21.13px;font-size:10.3px;line-height:13px;font-weight:bold;color:#3d3263;letter-spacing:-0.311px;">LOGOUT</div>
<div class="t" style="left:99.70px;top:72.89px;font-size:26.3px;line-height:34px;font-weight:bold;color:#0f1535;letter-spacing:-0.491px;word-spacing:2.5px;">Marketing Video</div>
<div class="t" style="left:151.40px;top:132.10px;font-size:10.4px;line-height:14px;font-weight:bold;color:#16161a;letter-spacing:0.242px;">Upload Asset/</div>
<div class="t" style="left:151.40px;top:145.70px;font-size:10.4px;line-height:14px;font-weight:bold;color:#16161a;letter-spacing:0.334px;">Contact Support</div>
<div class="t" style="left:151.00px;top:177.60px;font-size:10.4px;line-height:14px;font-weight:bold;color:#16161a;letter-spacing:0.203px;">Script</div>
<div class="t" style="left:150.90px;top:217.40px;font-size:10.4px;line-height:14px;font-weight:bold;color:#16161a;letter-spacing:0.358px;">Storyboard</div>
<div class="t" style="left:151.20px;top:257.70px;font-size:10.4px;line-height:14px;font-weight:bold;color:#16161a;letter-spacing:0.206px;">Voiceover</div>
<div class="t" style="left:151.20px;top:296.90px;font-size:10.4px;line-height:14px;font-weight:bold;color:#16161a;letter-spacing:0.291px;">Soundtrack</div>
<div class="t" style="left:151.20px;top:337.80px;font-size:10.4px;line-height:14px;font-weight:bold;color:#16161a;letter-spacing:-0.174px;">Art</div>
<div class="t" style="left:151.20px;top:376.90px;font-size:10.4px;line-height:14px;font-weight:bold;color:#16161a;letter-spacing:0.261px;">Video</div>
<div class="t" style="left:291.30px;top:151.43px;font-size:15.5px;line-height:20px;font-weight:normal;color:#17171b;letter-spacing:1.267px;text-shadow:.18px 0 0 #17171b,-.18px 0 0 #17171b;">Storyboard</div>
<div class="t" style="left:711.20px;top:154.97px;font-size:10.2px;line-height:13px;font-weight:bold;color:#2f2889;letter-spacing:0.224px;">HOW TO REVIEW YOUR STORYBOARD</div>
<div class="t" style="left:290.90px;top:194.43px;font-size:10.3px;line-height:13px;font-weight:bold;color:#17171b;letter-spacing:-0.131px;">SLIDE 1</div>
<div class="t" style="left:764.40px;top:194.27px;font-size:10.2px;line-height:13px;font-weight:bold;color:#2f2889;letter-spacing:0.213px;">DOWNLOAD STORYBOARD</div>
<div class="t" style="left:686.90px;top:228.56px;font-size:10.5px;line-height:14px;font-weight:bold;color:#17171b;letter-spacing:0.210px;">Direction:</div>
<div class="t" style="left:686.90px;top:247.46px;font-size:10.5px;line-height:14px;font-weight:normal;color:#47474c;letter-spacing:0.476px;">Lorem ipsum dolor sit amet, consetetur</div>
<div class="t" style="left:686.90px;top:263.46px;font-size:10.5px;line-height:14px;font-weight:normal;color:#47474c;letter-spacing:0.374px;">sadipscing elitr, sed diam nonumy</div>
<div class="t" style="left:686.90px;top:279.46px;font-size:10.5px;line-height:14px;font-weight:normal;color:#47474c;letter-spacing:0.514px;">eirmod tempor invidunt ut labore et</div>
<div class="t" style="left:686.90px;top:295.46px;font-size:10.5px;line-height:14px;font-weight:normal;color:#47474c;letter-spacing:0.387px;">dolore magna aliquyam erat, sed diam</div>
<div class="t" style="left:301.50px;top:425.96px;font-size:10.5px;line-height:14px;font-weight:bold;color:#17171b;letter-spacing:0.324px;">Script:</div>
<div class="t" style="left:301.50px;top:444.36px;font-size:10.5px;line-height:14px;font-weight:normal;color:#47474c;letter-spacing:0.433px;">Lorem ipsum dolor sit amet, consetetur sadipscing elitr, sed diam</div>
<div class="t" style="left:301.50px;top:460.36px;font-size:10.5px;line-height:14px;font-weight:normal;color:#47474c;letter-spacing:0.490px;">nonumy eirmod tempor invidunt ut labore et dolore magna aliquyam</div>
<div class="t" style="left:301.50px;top:476.36px;font-size:10.5px;line-height:14px;font-weight:normal;color:#47474c;letter-spacing:0.410px;">erat, sed diam voluptua. dolor sit amet.</div>
<div class="t" style="left:301.50px;top:492.36px;font-size:10.5px;line-height:14px;font-weight:normal;color:#47474c;letter-spacing:0.433px;">Lorem ipsum dolor sit amet, consetetur sadipscing elitr, sed diam</div>
<div class="t" style="left:686.50px;top:425.86px;font-size:10.5px;line-height:14px;font-weight:bold;color:#17171b;letter-spacing:-0.056px;">Assets:</div>
<div class="t" style="left:686.90px;top:444.36px;font-size:10.5px;line-height:14px;font-weight:normal;color:#47474c;letter-spacing:0.476px;">Lorem ipsum dolor sit amet, consetetur</div>
<div class="t" style="left:686.90px;top:460.36px;font-size:10.5px;line-height:14px;font-weight:normal;color:#47474c;letter-spacing:0.374px;">sadipscing elitr, sed diam nonumy</div>
<div class="t" style="left:686.90px;top:476.36px;font-size:10.5px;line-height:14px;font-weight:normal;color:#47474c;letter-spacing:0.514px;">eirmod tempor invidunt ut labore et</div>
<div class="t" style="left:686.90px;top:492.36px;font-size:10.5px;line-height:14px;font-weight:normal;color:#47474c;letter-spacing:0.387px;">dolore magna aliquyam erat, sed diam</div>
<div class="t" style="left:584.40px;top:582.78px;font-size:9.3px;line-height:12px;font-weight:normal;color:#5a5a60;letter-spacing:0.002px;">1 of 4</div>
<div class="t" style="left:285.80px;top:621.16px;font-size:10.5px;line-height:14px;font-weight:bold;color:#17171b;letter-spacing:0.157px;">Feedback</div>
<div class="t" style="left:302.10px;top:663.13px;font-size:10.3px;line-height:13px;font-weight:normal;color:#8b8b90;letter-spacing:0.487px;">Enter your feedback for the current slide.</div>
<div class="t" style="left:396.20px;top:878.40px;font-size:10.4px;line-height:14px;font-weight:bold;color:#2f2889;letter-spacing:-0.073px;">BACK TO DASHBOARD</div>
<div class="t" style="left:572.00px;top:878.40px;font-size:10.4px;line-height:14px;font-weight:bold;color:#fff9e6;letter-spacing:-0.131px;">SAVE</div>
<div class="t" style="left:657.50px;top:878.80px;font-size:10.4px;line-height:14px;font-weight:bold;color:#ffffff;letter-spacing:0.112px;">SUBMIT FEEDBACK</div>
<div class="t" style="left:792.30px;top:878.80px;font-size:10.4px;line-height:14px;font-weight:bold;color:#ffffff;letter-spacing:-0.012px;">APPROVE STORYBOARD</div>
</div>
</body>
</html>
